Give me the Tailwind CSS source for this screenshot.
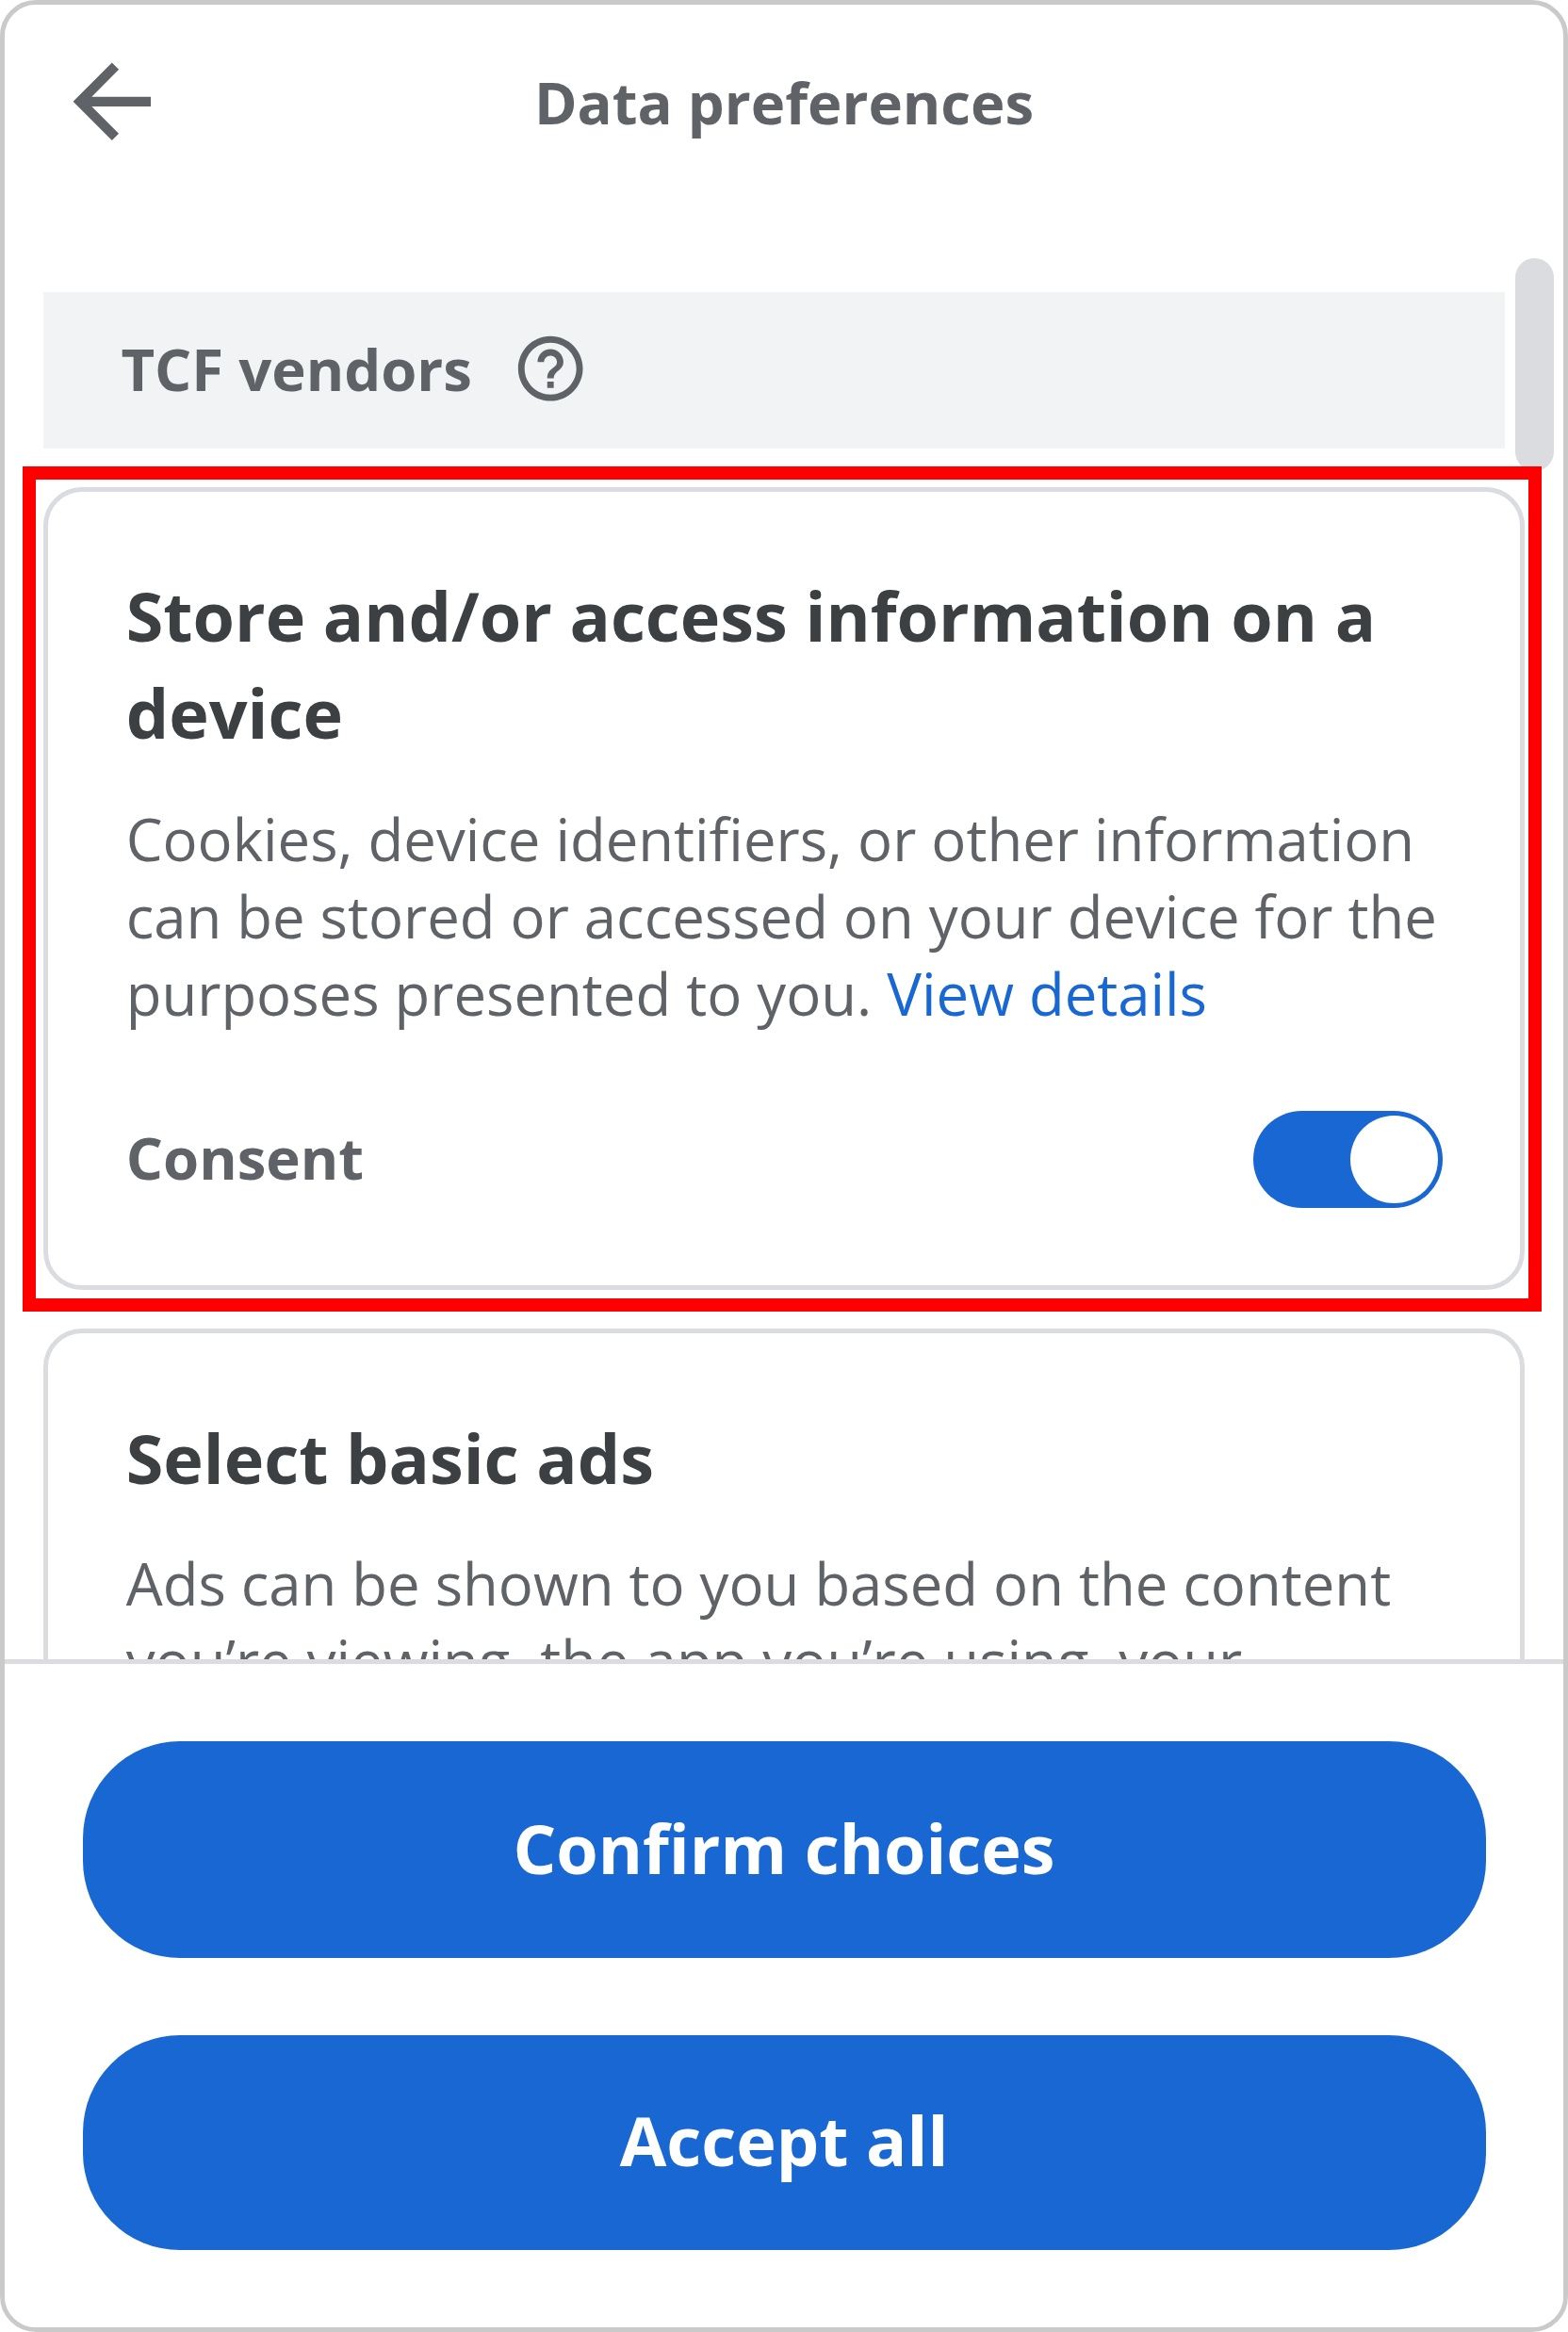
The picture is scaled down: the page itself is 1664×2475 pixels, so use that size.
<!DOCTYPE html>
<html lang="en">
<head>
<meta charset="utf-8">
<title>Data preferences</title>
<script src="https://cdn.jsdelivr.net/npm/@tailwindcss/browser@4"></script>
</head>
<body class="bg-white">
<div class="relative flex h-[2475px] w-[1664px] flex-col overflow-hidden rounded-[38px] border-5 border-[#cacaca] bg-white font-['Open_Sans','Noto_Sans',sans-serif] text-[#5f6368]">

  <header class="relative flex h-[305px] shrink-0 items-start justify-center pt-[61.5px]">
    <button class="absolute top-[41px] left-[51.5px]" aria-label="Back">
      <svg class="size-[123.6px]" viewBox="0 0 24 24" fill="currentColor"><path d="M20 11H7.83l5.59-5.59L12 4l-8 8 8 8 1.41-1.41L7.83 13H20z"/></svg>
    </button>
    <h1 class="text-[61.65px] leading-[82.4px] font-bold">Data preferences</h1>
  </header>

  <main class="flex min-h-0 flex-1 flex-col overflow-hidden pr-[41.5px] pl-[41px]">
    <div class="mr-[20.5px] flex h-[165.5px] shrink-0 items-center gap-[41.5px] bg-[#f1f3f4] pb-[3px] pl-[82.4px]">
      <h2 class="text-[61.65px] leading-[82.4px] font-bold">TCF vendors</h2>
      <svg class="size-[82.4px]" viewBox="0 0 24 24" fill="currentColor"><path d="M11 18h2v-2h-2v2zm1-16C6.48 2 2 6.48 2 12s4.480 10 10 10 10-4.480 10-10S17.520 2 12 2zm0 18c-4.410 0-8-3.590-8-8s3.590-8 8-8 8 3.590 8 8-3.590 8-8 8zm0-14c-2.210 0-4 1.790-4 4h2c0-1.100.9-2 2-2s2 .9 2 2c0 2-3 1.750-3 5h2c0-2.250 3-2.500 3-5 0-2.210-1.790-4-4-4z"/></svg>
    </div>

    <section class="relative z-10 mt-[41.2px] h-[852.3px] shrink-0 rounded-[41px] border-5 border-[#dadce0] pt-[80px] pr-[82px] pl-[82.7px]">
      <div class="pointer-events-none absolute -top-[27px] -right-[23.5px] -bottom-[28px] -left-[27px] border-14 border-[#ff0000]"></div>
      <h3 class="text-[71.9px] leading-[103px] font-bold text-[#3c4043]">Store and/or access information on a<br>device</h3>
      <p class="mt-[41px] text-[61.65px] leading-[82.2px] whitespace-nowrap">Cookies, device identifiers, or other information<br>can be stored or accessed on your device for the<br>purposes presented to you. <a class="text-[#1967d2]">View details</a></p>
      <div class="mt-[83.6px] flex h-[103px] items-center justify-between">
        <span class="pb-[4px] text-[61.65px] leading-[82.4px] font-bold">Consent</span>
        <span class="flex h-[103px] w-[200.5px] items-center justify-end rounded-full bg-[#1967d2] pr-[5px]"><span class="size-[92.7px] rounded-full bg-white"></span></span>
      </div>
    </section>

    <section class="mt-[41.2px] h-[852px] shrink-0 rounded-[41px] border-5 border-[#dadce0] pt-[80.5px] pr-[82px] pl-[82.7px]">
      <h3 class="text-[71.9px] leading-[103px] font-bold text-[#3c4043]">Select basic ads</h3>
      <p class="mt-[40.5px] text-[61.65px] leading-[82.2px] whitespace-nowrap">Ads can be shown to you based on the content<br>you’re viewing, the app you’re using, your</p>
    </section>
  </main>
  <div class="absolute top-[268.5px] left-[1602.6px] h-[226.5px] w-[41.2px] rounded-full bg-[#dadce0]"></div>

  <footer class="flex h-[708.7px] shrink-0 flex-col gap-[82.4px] border-t-5 border-[#dadce0] bg-white px-[82.5px] pt-[82px]">
    <button class="h-[229.3px] shrink-0 rounded-[103px] bg-[#1967d2] pb-[3px] text-[71.9px] leading-[103px] font-bold text-white">Confirm choices</button>
    <button class="h-[227.5px] shrink-0 rounded-[103px] bg-[#1967d2] pb-[4px] text-[71.9px] leading-[103px] font-bold text-white">Accept all</button>
  </footer>
</div>
</body>
</html>
